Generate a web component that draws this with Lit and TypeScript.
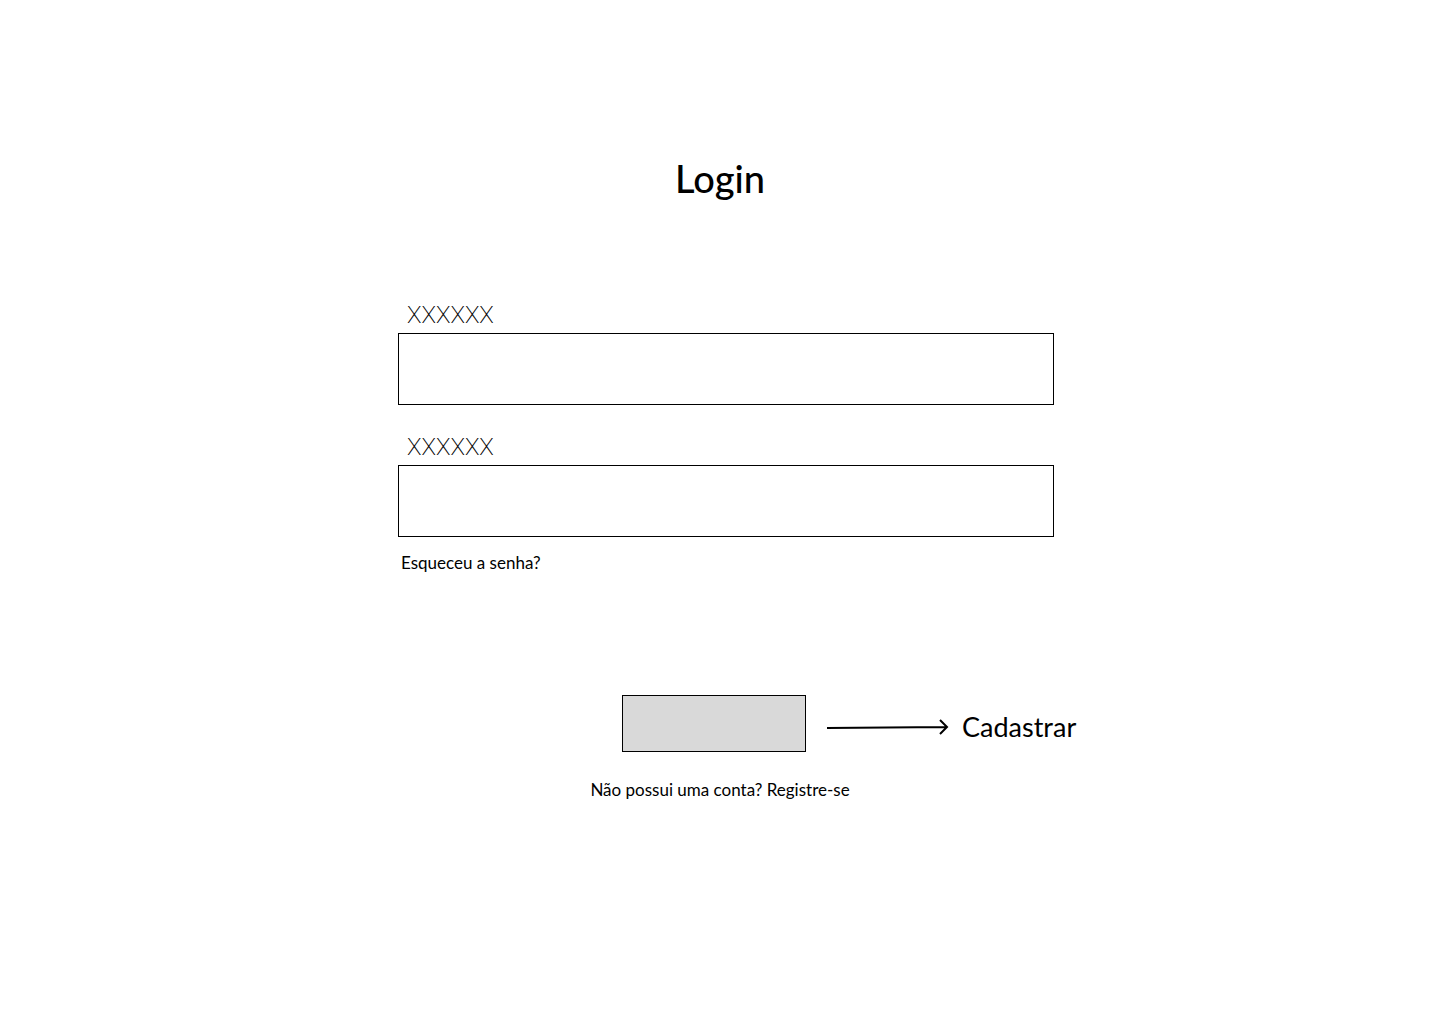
import { LitElement, html, css } from "lit";
import { customElement } from "lit/decorators.js";

@customElement("app-root")
export class AppRoot extends LitElement {
  static styles = css`
    :host {
      display: block;
      min-height: 100vh;
      background: #fff;
      color: #000;
      font-family: Lato, "Liberation Sans", sans-serif;
      font-size: 17px;
      line-height: 24px;
    }
    * {
      box-sizing: border-box;
    }
    .page {
      display: flex;
      flex-direction: column;
      padding: 152px 0 48px;
    }
    .title {
      margin: 0;
      text-align: center;
      font-size: 38px;
      line-height: 52px;
      font-weight: 500;
    }
    .fields {
      display: flex;
      flex-direction: column;
      width: 100%;
      max-width: 668px;
      margin: 97px auto 0;
      padding-left: 12px;
    }
    .label {
      padding-left: 9px;
      font-family: Roboto, sans-serif;
      font-size: 24px;
      line-height: 29px;
      font-weight: 200;
    }
    .input {
      width: 100%;
      height: 72px;
      margin: 3px 0 28px;
      padding: 0 16px;
      border: 1px solid #000;
      border-radius: 0;
      background: #fff;
      font: inherit;
    }
    .forgot {
      align-self: flex-start;
      margin-top: -14px;
      padding-left: 3px;
    }
    a {
      color: inherit;
      text-decoration: none;
    }
    .actions {
      display: grid;
      grid-template-columns: 1fr 184px 1fr;
      align-items: center;
      margin-top: 120px;
      padding-right: 12px;
    }
    .submit {
      grid-column: 2;
      height: 57px;
      border: 1px solid #000;
      border-radius: 0;
      background: #d9d9d9;
    }
    .note {
      display: flex;
      align-items: center;
      gap: 12px;
      padding: 6px 0 0 20px;
      font-size: 27px;
      line-height: 36px;
    }
    .arrow {
      flex: none;
      fill: none;
      stroke: #000;
      stroke-width: 2;
    }
    .register {
      margin: 26px 0 0;
      text-align: center;
    }
  `;

  render() {
    return html`
      <main class="page">
        <h1 class="title">Login</h1>
        <form @submit=${(e: Event) => e.preventDefault()}>
          <div class="fields">
            <label class="label" for="user">XXXXXX</label>
            <input class="input" id="user" type="text" />
            <label class="label" for="password">XXXXXX</label>
            <input class="input" id="password" type="password" />
            <a class="forgot" href="#">Esqueceu a senha?</a>
          </div>
          <div class="actions">
            <button class="submit" type="submit" aria-labelledby="note"></button>
            <div class="note">
              <svg class="arrow" width="124" height="16" viewBox="0 0 124 16" aria-hidden="true">
                <path d="M1 9 L121 8 M114 1 L121 8 L114 15" />
              </svg>
              <span id="note">Cadastrar</span>
            </div>
          </div>
        </form>
        <p class="register">Não possui uma conta? <a href="#">Registre-se</a></p>
      </main>
    `;
  }
}
